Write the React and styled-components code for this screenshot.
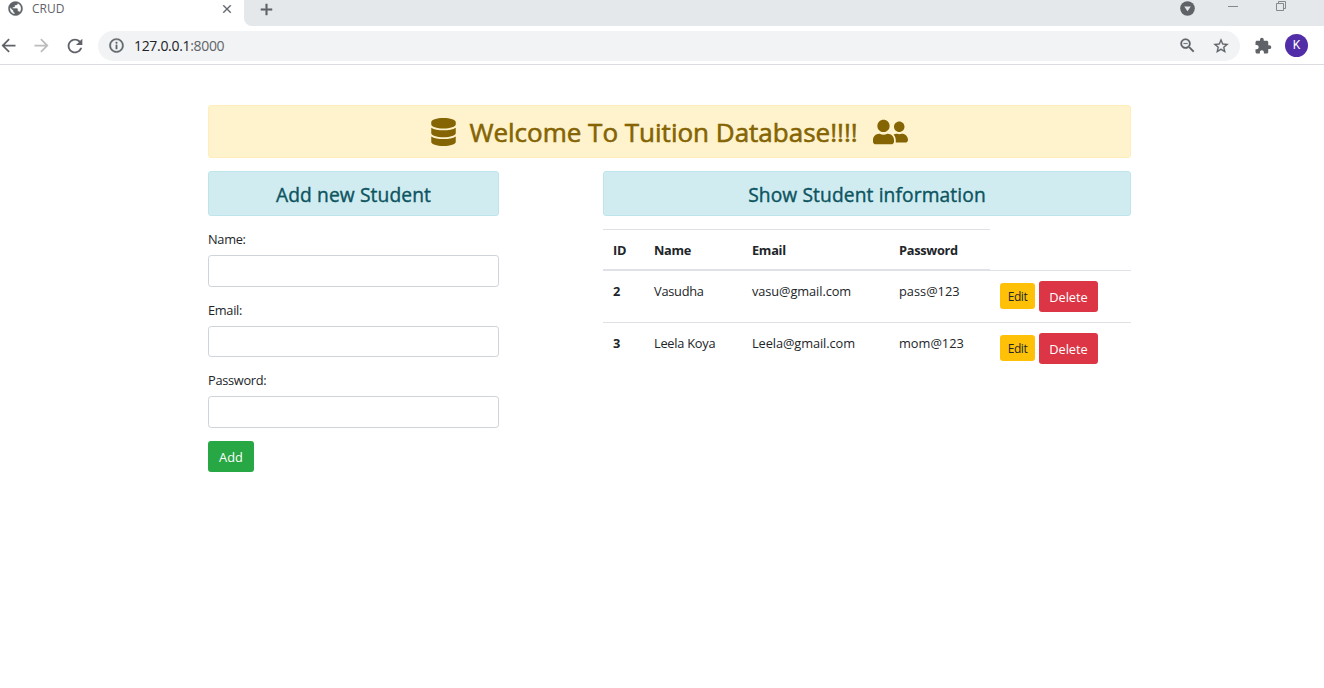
import React from "react";
import styled, { createGlobalStyle } from "styled-components";
import { FaDatabase, FaUserFriends } from "react-icons/fa";
import {
  MdPublic, MdClose, MdAdd, MdArrowBack, MdArrowForward, MdRefresh,
  MdInfoOutline, MdZoomOut, MdStarBorder, MdExtension,
} from "react-icons/md";

const GlobalStyle = createGlobalStyle`
  *, *::before, *::after { box-sizing: border-box; }
  body {
    margin: 0;
    background: #fff;
    color: #212529;
    font-family: "Open Sans", "Noto Sans", sans-serif;
    font-size: 12.8px;
    line-height: 1.5;
    overflow: hidden;
  }
  svg { display: block; flex: none; }
  svg path[fill="none"] { stroke: none; }
`;

const Browser = styled.div`
  height: 65px;
  border-bottom: 1px solid #dadce0;
`;
const TabStrip = styled.div`
  display: flex;
  height: 26px;
  background: #fff;
`;
const Tab = styled.div`
  display: flex;
  align-items: center;
  width: 244px;
  height: 17px;
  padding: 0 10px 0 7px;
  color: #5f6368;
  svg { stroke: currentColor; stroke-width: 0.5px; }
`;
const TabTitle = styled.span`
  flex: 1;
  margin-left: 8px;
  font-size: 12px;
  line-height: 16px;
`;
const StripRest = styled.div`
  flex: 1;
  display: flex;
  align-items: flex-start;
  height: 26px;
  padding: 0 38px 0 13px;
  background: #e4e8eb;
  border-bottom-left-radius: 8px;
  color: #5f6368;
`;
const NewTabIcon = styled(MdAdd)`
  stroke: currentColor;
  stroke-width: 0.6px;
`;
const WindowControls = styled.div`
  display: grid;
  grid-template-columns: 48px 48px 10px;
  margin-left: auto;
`;
const Toolbar = styled.div`
  display: flex;
  align-items: center;
  height: 38px;
  padding: 1px 16px 0 0;
  color: #5f6368;
`;
const NavButtons = styled.div`
  display: flex;
  align-items: center;
  gap: 12px;
  width: 100px;
  margin-left: -2px;
`;
const Omnibox = styled.div`
  display: flex;
  align-items: center;
  width: 1142px;
  height: 30px;
  padding: 0 10px;
  border-radius: 15px;
  background: #f1f3f4;
`;
const InfoIcon = styled(MdInfoOutline)`
  stroke: currentColor;
  stroke-width: 0.5px;
`;
const Url = styled.span`
  flex: 1;
  margin-left: 9px;
  font-size: 14px;
  line-height: 20px;
  letter-spacing: -0.32px;
  color: #5f6368;
`;
const Host = styled.span`
  color: #202124;
`;
const OmniActions = styled.div`
  display: flex;
  align-items: center;
  gap: 15px;
  svg { stroke: currentColor; stroke-width: 0.3px; }
`;
const Extensions = styled.div`
  display: flex;
  align-items: center;
  gap: 13px;
  margin-left: 14px;
`;
const Avatar = styled.div`
  width: 23px;
  height: 23px;
  border-radius: 50%;
  background: #512da8;
  color: #fff;
  font: 12px/23px Roboto, sans-serif;
  text-align: center;
`;

const Page = styled.main`
  width: 923px;
  margin: 40px 0 0 208px;
`;
const Banner = styled.h2`
  display: flex;
  align-items: center;
  justify-content: center;
  height: 53px;
  margin: 0 0 13px;
  border: 1px solid #ffeeba;
  border-radius: 3px;
  background: #fff3cd;
  color: #856404;
  font-size: 26px;
  font-weight: 500;
`;
const DatabaseIcon = styled(FaDatabase)`
  width: 25px;
  height: 28px;
`;
const UsersIcon = styled(FaUserFriends)`
  width: 35px;
  height: 28px;
`;
const BannerText = styled.span`
  margin: 2px 15px 0 13px;
  -webkit-text-stroke: 0.6px currentColor;
`;
const Columns = styled.div`
  display: grid;
  grid-template-columns: 291px 528px;
  column-gap: 104px;
  align-items: start;
`;
const PanelTitle = styled.h4`
  height: 45px;
  margin: 0 0 13px;
  border: 1px solid #bee5eb;
  border-radius: 3px;
  background: #d1ecf1;
  color: #0c5460;
  font-size: 19.2px;
  font-weight: 500;
  letter-spacing: 0.12px;
  line-height: 46px;
  text-align: center;
  -webkit-text-stroke: 0.4px currentColor;
`;
const Field = styled.div`
  height: 70.6px;
`;
const Label = styled.label`
  display: block;
  height: 26.2px;
  line-height: 20px;
  letter-spacing: -0.3px;
`;
const Input = styled.input`
  display: block;
  width: 100%;
  height: 31.4px;
  border: 1px solid #ced4da;
  border-radius: 3.2px;
  background: #fff;
`;
const Button = styled.button`
  height: ${(p) => (p.$small ? 26 : 31)}px;
  width: ${(p) => p.$width}px;
  padding: 0;
  border: 0;
  border-radius: 3px;
  background: ${(p) => p.$bg};
  color: ${(p) => p.$color || "#fff"};
  font-family: inherit;
  font-size: ${(p) => (p.$small ? 12 : 12.8)}px;
  line-height: ${(p) => (p.$small ? 27 : 32)}px;
  letter-spacing: ${(p) => (p.$small ? -0.4 : 0)}px;
`;
const Table = styled.table`
  width: 528px;
  table-layout: fixed;
  border-collapse: separate;
  border-spacing: 0;
`;
const HeadCell = styled.th`
  width: ${(p) => p.$width}px;
  height: 41px;
  padding: 2px 10px 0;
  border-top: 1px solid #dee2e6;
  border-bottom: 1px solid #dee2e6;
  text-align: left;
  letter-spacing: -0.3px;
`;
const EmptyHead = styled.td`
  width: 141px;
`;
const Cell = styled.td`
  height: 52px;
  padding: 10px 10px 0;
  border-top: 1px solid #dee2e6;
  vertical-align: top;
  font-weight: ${(p) => (p.$bold ? 700 : 400)};
  line-height: 20px;
  letter-spacing: ${(p) => p.$spacing || 0}px;
`;
const Actions = styled.div`
  display: flex;
  align-items: flex-start;
  gap: 4px;
  & > :first-child { margin-top: 2px; }
`;

const heads = [["ID", 41], ["Name", 98], ["Email", 147], ["Password", 101]];
const students = [
  { id: 2, name: "Vasudha", email: "vasu@gmail.com", pass: "pass@123" },
  { id: 3, name: "Leela Koya", email: "Leela@gmail.com", pass: "mom@123" },
];

export default function App() {
  return (
    <>
      <GlobalStyle />
      <Browser>
        <TabStrip>
          <Tab>
            <MdPublic size={17} />
            <TabTitle>CRUD</TabTitle>
            <MdClose size={14} />
          </Tab>
          <StripRest>
            <NewTabIcon size={19} />
            <WindowControls>
              <svg width="15" height="17" viewBox="0 0 15 17">
                <circle cx="7.5" cy="8.5" r="7.3" fill="#5f6368" />
                <path d="M4.2 6.5h6.6L7.5 11.2z" fill="#e4e8eb" />
              </svg>
              <svg width="10" height="17" viewBox="0 0 10 17">
                <path d="M0 6.5h10" stroke="#85898d" />
              </svg>
              <svg width="10" height="17" viewBox="0 0 10 17" fill="none" stroke="#85898d">
                <path d="M.5 3.5h7v7h-7zM2.5 3.5v-2h7v7h-2" />
              </svg>
            </WindowControls>
          </StripRest>
        </TabStrip>
        <Toolbar>
          <NavButtons>
            <MdArrowBack size={21} />
            <MdArrowForward size={21} color="#babcbe" />
            <MdRefresh size={22} />
          </NavButtons>
          <Omnibox>
            <InfoIcon size={17} />
            <Url><Host>127.0.0.1</Host>:8000</Url>
            <OmniActions>
              <MdZoomOut size={19} />
              <MdStarBorder size={18} />
            </OmniActions>
          </Omnibox>
          <Extensions>
            <MdExtension size={18} />
            <Avatar>K</Avatar>
          </Extensions>
        </Toolbar>
      </Browser>
      <Page>
        <Banner>
          <DatabaseIcon />
          <BannerText>Welcome To Tuition Database!!!!</BannerText>
          <UsersIcon />
        </Banner>
        <Columns>
          <section>
            <PanelTitle>Add new Student</PanelTitle>
            <Field><Label>Name:</Label><Input /></Field>
            <Field><Label>Email:</Label><Input /></Field>
            <Field><Label>Password:</Label><Input type="password" /></Field>
            <Button $bg="#28a745" $width={46}>Add</Button>
          </section>
          <section>
            <PanelTitle>Show Student information</PanelTitle>
            <Table>
              <thead>
                <tr>
                  {heads.map(([label, width]) => (
                    <HeadCell key={label} $width={width}>{label}</HeadCell>
                  ))}
                  <EmptyHead />
                </tr>
              </thead>
              <tbody>
                {students.map((s) => (
                  <tr key={s.id}>
                    <Cell $bold>{s.id}</Cell>
                    <Cell $spacing={-0.25}>{s.name}</Cell>
                    <Cell $spacing={-0.09}>{s.email}</Cell>
                    <Cell>{s.pass}</Cell>
                    <Cell>
                      <Actions>
                        <Button $small $bg="#ffc107" $color="#212529" $width={35}>Edit</Button>
                        <Button $bg="#dc3545" $width={59}>Delete</Button>
                      </Actions>
                    </Cell>
                  </tr>
                ))}
              </tbody>
            </Table>
          </section>
        </Columns>
      </Page>
    </>
  );
}
